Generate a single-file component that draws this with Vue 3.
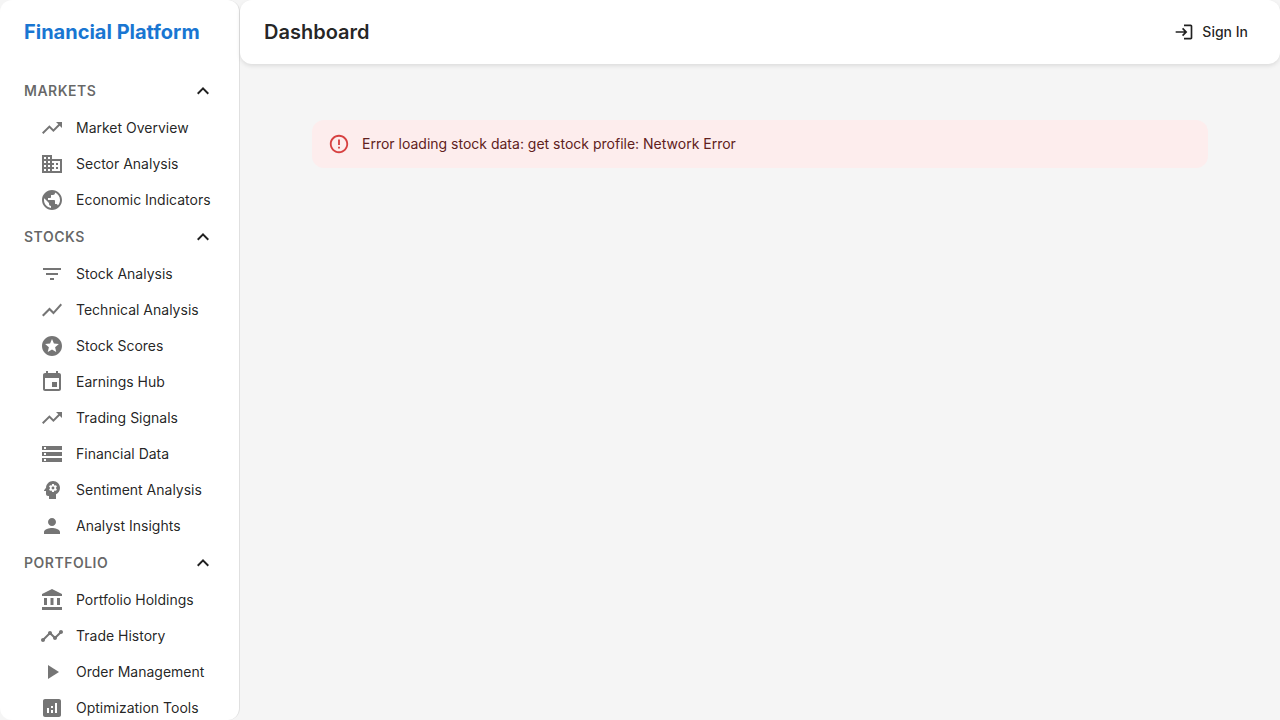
<script setup>
import { reactive } from 'vue'

const icons = {
  trending: 'm16 6 2.29 2.29-4.88 4.88-4-4L2 16.59 3.41 18l6-6 4 4 6.3-6.29L22 12V6z',
  business: 'M12 7V3H2v18h20V7zM6 19H4v-2h2zm0-4H4v-2h2zm0-4H4V9h2zm0-4H4V5h2zm4 12H8v-2h2zm0-4H8v-2h2zm0-4H8V9h2zm0-4H8V5h2zm10 12h-8v-2h2v-2h-2v-2h2v-2h-2V9h8zm-2-8h-2v2h2zm0 4h-2v2h2z',
  globe: 'M12 2C6.48 2 2 6.48 2 12s4.48 10 10 10 10-4.48 10-10S17.52 2 12 2m-1 17.93c-3.95-.49-7-3.85-7-7.93 0-.62.08-1.21.21-1.79L9 15v1c0 1.1.9 2 2 2zm6.9-2.54c-.26-.81-1-1.39-1.9-1.39h-1v-3c0-.55-.45-1-1-1H8v-2h2c.55 0 1-.45 1-1V7h2c1.1 0 2-.9 2-2v-.41c2.93 1.19 5 4.06 5 7.41 0 2.08-.8 3.97-2.1 5.39',
  filter: 'M10 18h4v-2h-4zM3 6v2h18V6zm3 7h12v-2H6z',
  chart: 'm3.5 18.49 6-6.01 4 4L22 6.92l-1.41-1.41-7.09 7.97-4-4L2 16.99z',
  stars: 'M11.99 2C6.47 2 2 6.48 2 12s4.47 10 9.99 10C17.52 22 22 17.52 22 12S17.52 2 11.99 2m4.24 16L12 15.45 7.77 18l1.12-4.81-3.73-3.23 4.92-.42L12 5l1.92 4.53 4.92.42-3.73 3.23z',
  event: 'M17 12h-5v5h5zM16 1v2H8V1H6v2H5c-1.11 0-1.99.9-1.99 2L3 19c0 1.1.89 2 2 2h14c1.1 0 2-.9 2-2V5c0-1.1-.9-2-2-2h-1V1zm3 18H5V8h14z',
  storage: 'M2 20h20v-4H2zm2-3h2v2H4zM2 4v4h20V4zm4 3H4V5h2zm-4 7h20v-4H2zm2-3h2v2H4z',
  psychology: 'M13 8.57c-.79 0-1.43.64-1.43 1.43s.64 1.43 1.43 1.43 1.43-.64 1.43-1.43-.64-1.43-1.43-1.43M13 3C9.25 3 6.2 5.94 6.02 9.64L4.1 12.2c-.25.33-.01.8.4.8H6v3c0 1.1.9 2 2 2h1v3h7v-4.68c2.36-1.12 4-3.53 4-6.32 0-3.87-3.13-7-7-7m3 7c0 .13-.01.26-.02.39l.83.66c.08.06.1.16.05.25l-.8 1.39c-.05.09-.16.12-.24.09l-.99-.4c-.21.16-.43.29-.67.39L14 13.83c-.01.1-.1.17-.2.17h-1.6c-.1 0-.18-.07-.2-.17l-.15-1.06c-.25-.1-.47-.23-.68-.39l-.99.4c-.09.03-.2 0-.25-.09l-.8-1.39c-.05-.08-.03-.19.05-.25l.84-.66c-.01-.13-.02-.26-.02-.39s.02-.27.04-.39l-.85-.66c-.08-.06-.1-.16-.05-.26l.8-1.38c.05-.09.15-.12.24-.09l1 .4c.2-.15.43-.29.67-.39L12 6.17c.02-.1.1-.17.2-.17h1.6c.1 0 .18.07.2.17l.15 1.06c.24.1.46.23.67.39l1-.4c.09-.03.2 0 .24.09l.8 1.38c.05.09.03.2-.05.26l-.85.66c.03.12.04.25.04.39',
  person: 'M12 12c2.21 0 4-1.79 4-4s-1.79-4-4-4-4 1.79-4 4 1.79 4 4 4m0 2c-2.67 0-8 1.34-8 4v2h16v-2c0-2.66-5.33-4-8-4',
  bank: 'M4 10h3v7H4zm6.5 0h3v7h-3zM2 19h20v3H2zm15-9h3v7h-3zm-5-9L2 6v2h20V6z',
  timeline: 'M23 8c0 1.1-.9 2-2 2-.18 0-.35-.02-.51-.07l-3.56 3.55c.05.16.07.34.07.52 0 1.1-.9 2-2 2s-2-.9-2-2c0-.18.02-.36.07-.52l-2.55-2.55c-.16.05-.34.07-.52.07s-.36-.02-.52-.07l-4.55 4.56c.05.16.07.33.07.51 0 1.1-.9 2-2 2s-2-.9-2-2 .9-2 2-2c.18 0 .35.02.51.07l4.56-4.55C8.02 9.36 8 9.18 8 9c0-1.1.9-2 2-2s2 .9 2 2c0 .18-.02.36-.07.52l2.55 2.55c.16-.05.34-.07.52-.07s.36.02.52.07l3.55-3.56C19.02 8.35 19 8.18 19 8c0-1.1.9-2 2-2s2 .9 2 2',
  play: 'M8 5v14l11-7z',
  analytics: 'M19 3H5c-1.1 0-2 .9-2 2v14c0 1.1.9 2 2 2h14c1.1 0 2-.9 2-2V5c0-1.1-.9-2-2-2M9 17H7v-5h2zm4 0h-2v-3h2zm0-5h-2v-2h2zm4 5h-2V7h2z',
}

const sections = reactive([
  {
    title: 'Markets',
    open: true,
    items: [
      { label: 'Market Overview', icon: 'trending' },
      { label: 'Sector Analysis', icon: 'business' },
      { label: 'Economic Indicators', icon: 'globe' },
    ],
  },
  {
    title: 'Stocks',
    open: true,
    items: [
      { label: 'Stock Analysis', icon: 'filter' },
      { label: 'Technical Analysis', icon: 'chart' },
      { label: 'Stock Scores', icon: 'stars' },
      { label: 'Earnings Hub', icon: 'event' },
      { label: 'Trading Signals', icon: 'trending' },
      { label: 'Financial Data', icon: 'storage' },
      { label: 'Sentiment Analysis', icon: 'psychology' },
      { label: 'Analyst Insights', icon: 'person' },
    ],
  },
  {
    title: 'Portfolio',
    open: true,
    items: [
      { label: 'Portfolio Holdings', icon: 'bank' },
      { label: 'Trade History', icon: 'timeline' },
      { label: 'Order Management', icon: 'play' },
      { label: 'Optimization Tools', icon: 'analytics' },
    ],
  },
])
</script>

<template>
  <div class="layout">
    <aside class="sidebar">
      <div class="brand">Financial Platform</div>
      <nav class="nav" aria-label="Main">
        <section v-for="section in sections" :key="section.title">
          <button
            class="section-toggle"
            type="button"
            :aria-expanded="section.open"
            @click="section.open = !section.open"
          >
            <span>{{ section.title }}</span>
            <svg class="icon" :class="{ flipped: !section.open }" viewBox="0 0 24 24" aria-hidden="true">
              <path d="m12 8-6 6 1.41 1.41L12 10.83l4.59 4.58L18 14z" />
            </svg>
          </button>
          <ul v-show="section.open" class="items">
            <li v-for="item in section.items" :key="item.label">
              <a class="item" href="#">
                <svg class="icon" viewBox="0 0 24 24" aria-hidden="true">
                  <path :d="icons[item.icon]" />
                </svg>
                <span>{{ item.label }}</span>
              </a>
            </li>
          </ul>
        </section>
      </nav>
    </aside>

    <div class="page">
      <header class="topbar">
        <h1 class="title">Dashboard</h1>
        <button class="sign-in" type="button">
          <svg class="icon-small" viewBox="0 0 24 24" aria-hidden="true">
            <path d="M11 7 9.6 8.4l2.6 2.6H2v2h10.2l-2.6 2.6L11 17l5-5zm9 12h-8v2h8c1.1 0 2-.9 2-2V5c0-1.1-.9-2-2-2h-8v2h8z" />
          </svg>
          <span>Sign In</span>
        </button>
      </header>
      <main class="content">
        <div class="alert" role="alert">
          <svg class="alert-icon" viewBox="0 0 24 24" aria-hidden="true">
            <path d="M11 15h2v2h-2zm0-8h2v6h-2zm.99-5C6.47 2 2 6.48 2 12s4.47 10 9.99 10C17.52 22 22 17.52 22 12S17.52 2 11.99 2zM12 20c-4.42 0-8-3.58-8-8s3.58-8 8-8 8 3.58 8 8-3.58 8-8 8z" />
          </svg>
          <span>Error loading stock data: get stock profile: Network Error</span>
        </div>
      </main>
    </div>
  </div>
</template>

<style>
body {
  margin: 0;
  background: #f5f5f5;
}
</style>

<style scoped>
.layout {
  display: flex;
  height: 100vh;
  overflow: hidden;
  background: #f5f5f5;
  color: rgba(0, 0, 0, 0.87);
  font-family: Inter, Roboto, sans-serif;
  font-size: 14px;
  line-height: 20px;
}

.layout *,
.layout {
  box-sizing: border-box;
}

button {
  border: 0;
  background: none;
  color: inherit;
  font: inherit;
  cursor: pointer;
}

svg {
  flex-shrink: 0;
  fill: currentColor;
}

.icon {
  width: 24px;
  height: 24px;
}

.flipped {
  transform: rotate(180deg);
}

.sidebar {
  flex: 0 0 240px;
  overflow: hidden;
  border-right: 1px solid rgba(0, 0, 0, 0.12);
  border-radius: 12px;
  background: #fff;
}

.brand {
  display: flex;
  align-items: center;
  height: 64px;
  padding: 0 24px;
  color: #1976d2;
  font-size: 20px;
  font-weight: 700;
  line-height: 32px;
}

.nav {
  padding: 8px 0;
}

.section-toggle {
  display: flex;
  align-items: center;
  justify-content: space-between;
  width: 100%;
  height: 38px;
  padding: 0 24px;
  color: rgba(0, 0, 0, 0.87);
}

.section-toggle span {
  color: rgba(0, 0, 0, 0.6);
  font-weight: 600;
  letter-spacing: 0.5px;
  text-transform: uppercase;
}

.items {
  margin: 0;
  padding: 0;
  list-style: none;
}

.item {
  display: flex;
  align-items: center;
  gap: 12px;
  height: 36px;
  padding-left: 40px;
  color: inherit;
  text-decoration: none;
  white-space: nowrap;
}

.item .icon {
  color: rgba(0, 0, 0, 0.54);
}

.page {
  flex: 1;
  min-width: 0;
}

.topbar {
  display: flex;
  align-items: center;
  justify-content: space-between;
  height: 64px;
  padding: 0 24px;
  border-radius: 12px;
  background: #fff;
  box-shadow: 0 2px 4px rgba(0, 0, 0, 0.1);
}

.title {
  margin: 0;
  font-size: 20px;
  font-weight: 600;
  line-height: 32px;
}

.sign-in {
  display: flex;
  align-items: center;
  gap: 8px;
  padding: 6px 8px;
  font-weight: 500;
}

.icon-small {
  width: 20px;
  height: 20px;
}

.content {
  padding: 56px 72px;
}

.alert {
  display: flex;
  align-items: center;
  gap: 12px;
  padding: 14px 16px;
  border-radius: 12px;
  background: #fdeded;
  color: #5f2120;
}

.alert-icon {
  width: 22px;
  height: 22px;
  margin: -1px 0;
  color: #d32f2f;
  opacity: 0.9;
}
</style>
